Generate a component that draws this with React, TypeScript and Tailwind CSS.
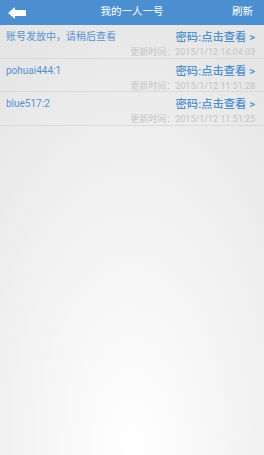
import React from "react";

const rows = [
  { name: "账号发放中，请稍后查看", time: "2015/1/12 14:04:03" },
  { name: "pohuai444:1", time: "2015/1/12 11:51:28" },
  { name: "blue517:2", time: "2015/1/12 11:51:25" },
];

export default function App() {
  return (
    <div
      className="w-[264px] h-[455px] overflow-hidden flex flex-col bg-[radial-gradient(ellipse_85%_100%_at_50%_100%,#ffffff_0%,#f7f7f7_35%,#eeeeee_70%,#e6e6e6_100%)]"
      style={{ fontFamily: 'Roboto, "Noto Sans CJK SC", sans-serif' }}
    >
      <div className="h-[25px] shrink-0 bg-[#4b8fd1] flex items-center justify-between text-white">
        <div className="w-[40px] h-full flex items-center pl-[8px]">
          <svg width="19" height="12" viewBox="0 0 19 12">
            <polygon points="0,6 7,0 7,3 18,3 18,9 7,9 7,12" fill="#ffffff" />
          </svg>
        </div>
        <div className="text-[10.5px] leading-none">我的一人一号</div>
        <div className="w-[40px] text-[10.5px] leading-none text-right pr-[11px]">刷新</div>
      </div>
      <div className="flex flex-col">
        {rows.map((r) => (
          <div
            key={r.time}
            className="h-[33.5px] border-b border-[#d9d9d9] flex justify-between pl-[6px] pr-[9px]"
          >
            <div className="text-[10px] text-[#5493d0] pt-[5px] leading-[14px]">{r.name}</div>
            <div className="flex flex-col items-end pt-[6px]">
              <div className="text-[11.3px] leading-[14px] font-medium text-[#4a8fd0]">
                密码:点击查看 &gt;
              </div>
              <div className="text-[9px] leading-[12px] mt-[1px] text-[#c4c4c4]">
                更新时间：{r.time}
              </div>
            </div>
          </div>
        ))}
      </div>
    </div>
  );
}
